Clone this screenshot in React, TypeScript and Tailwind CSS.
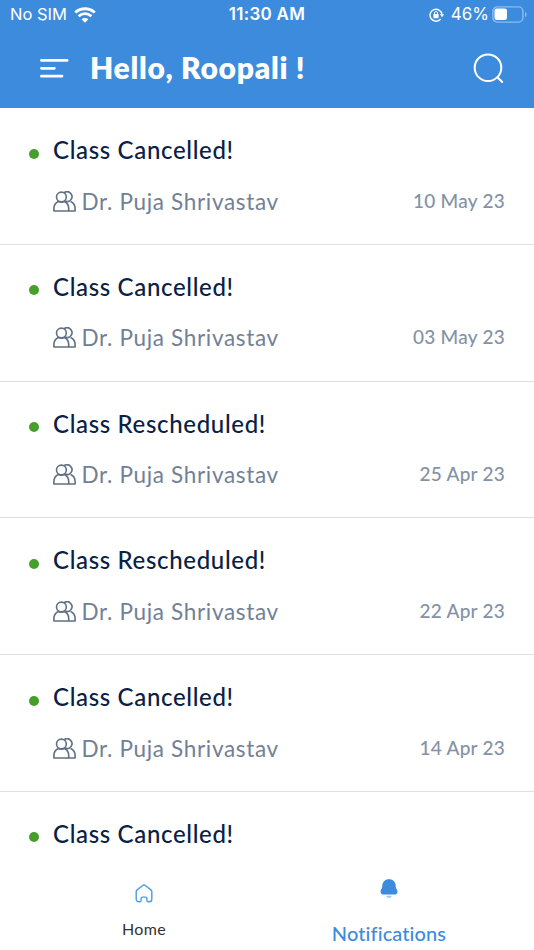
type Notice = {
  title: string;
  teacher?: string;
  date?: string;
};

const notices: Notice[] = [
  { title: "Class Cancelled!", teacher: "Dr. Puja Shrivastav", date: "10 May 23" },
  { title: "Class Cancelled!", teacher: "Dr. Puja Shrivastav", date: "03 May 23" },
  { title: "Class Rescheduled!", teacher: "Dr. Puja Shrivastav", date: "25 Apr 23" },
  { title: "Class Rescheduled!", teacher: "Dr. Puja Shrivastav", date: "22 Apr 23" },
  { title: "Class Cancelled!", teacher: "Dr. Puja Shrivastav", date: "14 Apr 23" },
  { title: "Class Cancelled!" },
];

function WifiIcon() {
  return (
    <svg className="ml-[7px] h-4 w-[22px]" viewBox="0 0 22 16" fill="none" stroke="white" strokeWidth="2.8">
      <path d="M1.2 5.5C6.8.5 15.2.5 20.8 5.5" />
      <path d="M4.6 9.2C8.3 5.8 13.7 5.8 17.4 9.2" />
      <path d="M7.6 12.3c2-1.8 4.8-1.8 6.8 0L11 15.7z" fill="white" stroke="none" />
    </svg>
  );
}

function RotationLockIcon() {
  return (
    <svg className="h-[14px] w-[16px]" viewBox="0 0 16 14" fill="none" stroke="white" strokeWidth="1.4">
      <path d="M11.7 11A6 6 0 1 1 13 6.5" />
      <path d="M10.9 6.2h4.3L13 9.3z" fill="white" stroke="none" />
      <rect x="4.4" y="5.9" width="5.2" height="4.3" rx=".7" fill="white" stroke="none" />
      <path d="M5.5 6.3V5a1.5 1.5 0 0 1 3 0v1.3" strokeWidth="1" />
    </svg>
  );
}

function BatteryIcon() {
  return (
    <svg className="ml-[3px] h-[17px] w-[35px]" viewBox="0 0 35 17">
      <rect x=".9" y=".9" width="30" height="15.2" rx="4.3" fill="none" stroke="white" strokeOpacity=".42" strokeWidth="1.4" />
      <rect x="2.5" y="2.5" width="12.5" height="11.5" rx="2.3" fill="white" />
      <path d="M33 6v5c2.1-.9 2.1-4.1 0-5" fill="white" fillOpacity=".45" />
    </svg>
  );
}

function PeopleIcon() {
  return (
    <svg className="mb-px h-[21px] w-[23px] shrink-0" viewBox="0 0 23 21" fill="none" stroke="#5f7085" strokeWidth="1.6" strokeLinejoin="round">
      <circle cx="8.4" cy="6" r="4.9" />
      <path d="M.9 20v-2.6c0-3.2 1.8-5.6 4.6-6.9 1.8.9 4 .9 5.8 0 2.7 1.3 4.4 3.7 4.4 6.9V20z" />
      <path d="M11 1.8a4.9 4.9 0 1 1 1 8.3M17.6 10.5c2.8 1.3 4.5 3.7 4.5 6.9V20h-6.4" />
    </svg>
  );
}

function NoticeRow({ notice }: { notice: Notice }) {
  return (
    <li className="flex h-[136.75px] shrink-0 border-b-[1.5px] border-[#dfe0e2] pl-[29px] pr-[30px] pt-[27px]">
      <span className="mt-[13.5px] size-[10px] shrink-0 rounded-full bg-[#479e2b]" />
      <div className="ml-[14px] flex-1">
        <h2 className="text-[24px] leading-[30px] font-medium tracking-[0.66px] text-[#0a2145]">
          {notice.title}
        </h2>
        {notice.teacher && (
          <div className="mt-[21.5px] flex items-center">
            <PeopleIcon />
            <span className="ml-[5.5px] text-[22.5px] leading-[30px] tracking-[0.67px] text-[#718096]">
              {notice.teacher}
            </span>
            <span className="-mr-px ml-auto pb-[2px] text-[19px] leading-[28px] font-medium tracking-[0.25px] text-[#8492a6]">
              {notice.date}
            </span>
          </div>
        )}
      </div>
    </li>
  );
}

export default function App() {
  return (
    <div className="flex h-[950px] w-[534px] flex-col overflow-hidden bg-white font-['Lato',sans-serif]">
      <header className="h-[108px] shrink-0 bg-[#3d8bdd] text-white">
        <div className="grid h-[29px] grid-cols-3 items-center pl-[10px] pr-[7px] font-['Inter',sans-serif] text-[17px]">
          <div className="flex items-center">
            <span className="text-[16.5px]">No SIM</span>
            <WifiIcon />
          </div>
          <span className="pr-[3px] text-center font-semibold tracking-[0.3px]">11:30 AM</span>
          <div className="flex items-center justify-end">
            <RotationLockIcon />
            <span className="ml-[6px]">46%</span>
            <BatteryIcon />
          </div>
        </div>
        <div className="flex h-[79px] items-center pl-10 pr-[30px]">
          <svg className="h-5 w-[29px]" viewBox="0 0 29 20" stroke="white" strokeWidth="2.7" strokeLinecap="round">
            <path d="M1.4 1.4h25.7M1.4 9.3h13M1.4 17.2h20.6" />
          </svg>
          <h1 className="ml-[21px] pb-[4px] text-[30px] leading-[36px] font-extrabold tracking-[0.7px]">
            Hello, Roopali !
          </h1>
          <svg className="ml-auto h-[31px] w-[31px]" viewBox="0 0 31 31" fill="none" stroke="white" strokeWidth="2" strokeLinecap="round">
            <circle cx="15" cy="14.7" r="13.3" />
            <path d="m24.5 24.3 4.7 4.7" />
          </svg>
        </div>
      </header>

      <ul className="flex h-[749px] shrink-0 flex-col overflow-hidden">
        {notices.map((notice, i) => (
          <NoticeRow key={i} notice={notice} />
        ))}
      </ul>

      <nav className="flex flex-1 bg-white">
        <button className="flex w-[288px] flex-col items-center pt-[27px]">
          <svg className="h-[19px] w-[18px]" viewBox="0 0 18 19" fill="none" stroke="#4a9bea" strokeWidth="1.4" strokeLinejoin="round">
            <path d="M1.2 7.8c0-.8.3-1.4.9-1.9l5.6-4.4c.8-.6 1.8-.6 2.6 0l5.6 4.4c.6.5.9 1.1.9 1.9v7.5a2.5 2.5 0 0 1-2.5 2.5h-1c-.8 0-1.4-.6-1.4-1.4v-1.9c0-.8-.6-1.4-1.4-1.4h-3c-.8 0-1.4.6-1.4 1.4v1.9c0 .8-.6 1.4-1.4 1.4h-1a2.5 2.5 0 0 1-2.5-2.5z" />
          </svg>
          <span className="mt-[15px] text-[16px] leading-[22px] tracking-[0.35px] text-[#333333]">Home</span>
        </button>
        <button className="flex w-[202px] flex-col items-center pt-[22px]">
          <svg className="h-5 w-[18px]" viewBox="0 0 18 20">
            <path d="M9 .2c4 0 6.5 2.6 6.7 6.3.1 1.8.3 2.9 1.3 4.3 1.1 2.5 0 4.8-2.5 4.8h-11C1 15.6-.1 13.3 1 10.8c1-1.4 1.2-2.5 1.3-4.3C2.5 2.8 5 .2 9 .2z" fill="#3d8bdd" />
            <path d="M6.3 16.8h5.4c-.5 2.9-4.9 2.9-5.4 0z" fill="#9ccaf3" />
          </svg>
          <span className="mt-[21px] text-[20px] leading-[26px] font-medium tracking-[0.1px] text-[#3d8bdd]">
            Notifications
          </span>
        </button>
      </nav>
    </div>
  );
}
